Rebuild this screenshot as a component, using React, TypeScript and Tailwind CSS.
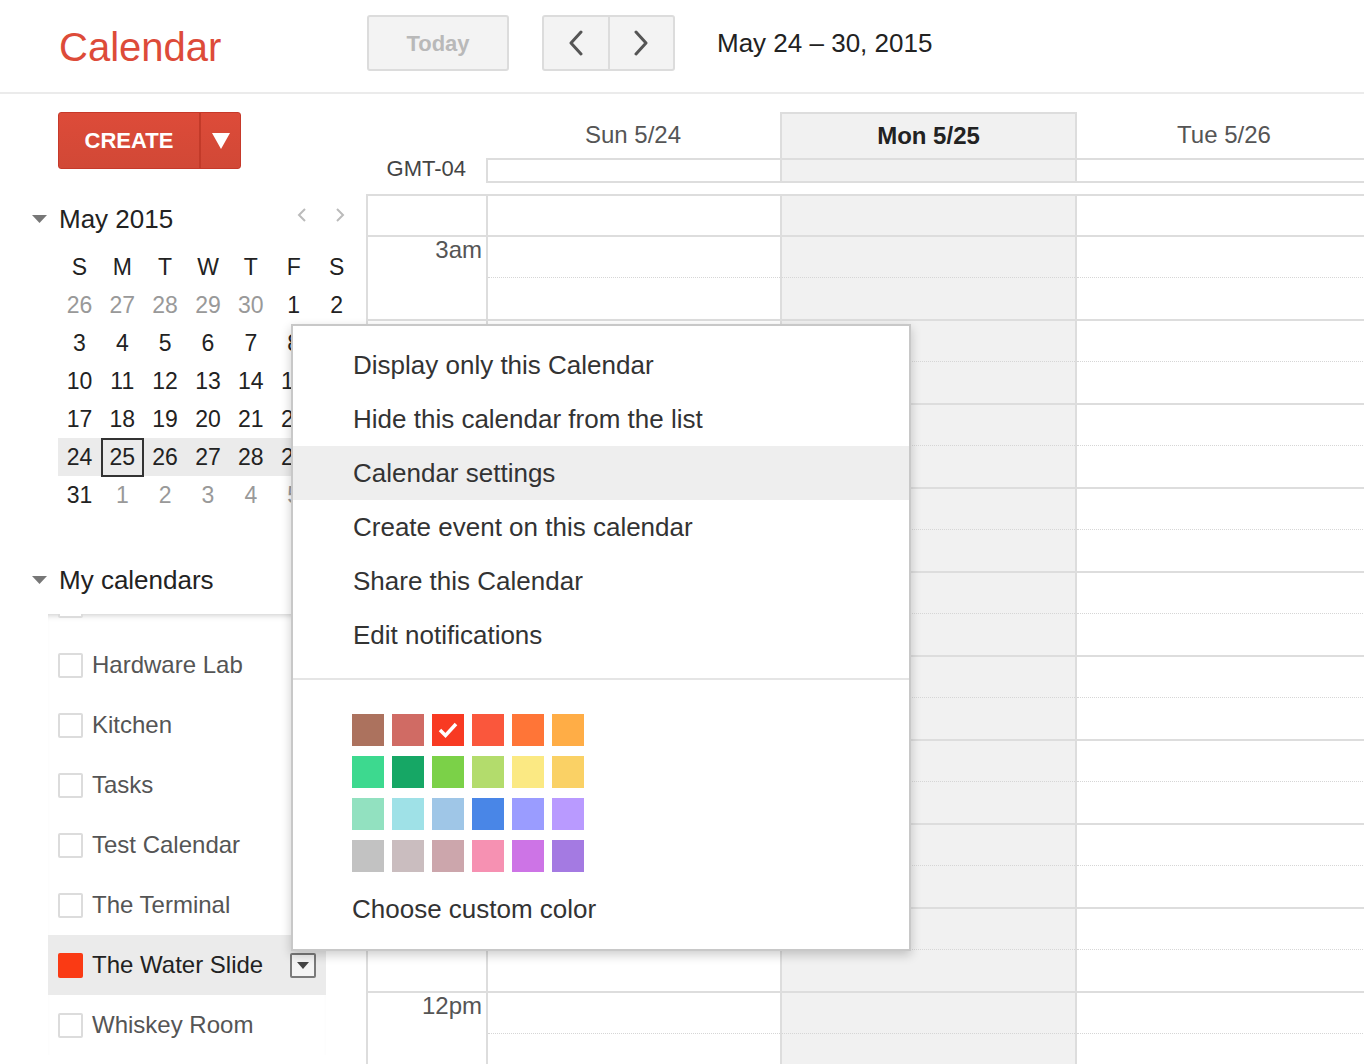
import React from "react";

const FONT = "font-['Liberation_Sans',Arial,Helvetica,sans-serif]";

type Cell = { d: number; muted?: boolean; today?: boolean };

const weeks: Cell[][] = [
  [{ d: 26, muted: true }, { d: 27, muted: true }, { d: 28, muted: true }, { d: 29, muted: true }, { d: 30, muted: true }, { d: 1 }, { d: 2 }],
  [{ d: 3 }, { d: 4 }, { d: 5 }, { d: 6 }, { d: 7 }, { d: 8 }, { d: 9 }],
  [{ d: 10 }, { d: 11 }, { d: 12 }, { d: 13 }, { d: 14 }, { d: 15 }, { d: 16 }],
  [{ d: 17 }, { d: 18 }, { d: 19 }, { d: 20 }, { d: 21 }, { d: 22 }, { d: 23 }],
  [{ d: 24 }, { d: 25, today: true }, { d: 26 }, { d: 27 }, { d: 28 }, { d: 29 }, { d: 30 }],
  [{ d: 31 }, { d: 1, muted: true }, { d: 2, muted: true }, { d: 3, muted: true }, { d: 4, muted: true }, { d: 5, muted: true }, { d: 6, muted: true }],
];

const calendars = [
  "Conference Room",
  "Hardware Lab",
  "Kitchen",
  "Tasks",
  "Test Calendar",
  "The Terminal",
  "The Water Slide",
  "Whiskey Room",
];

const days = ["Sun 5/24", "Mon 5/25", "Tue 5/26", "Wed 5/27", "Thu 5/28", "Fri 5/29", "Sat 5/30"];
const hours = ["3am", "4am", "5am", "6am", "7am", "8am", "9am", "10am", "11am", "12pm", "1pm"];

const swatches = [
  ["#ac725e", "#d06b64", "#f83a22", "#fa573c", "#ff7537", "#ffad46"],
  ["#3dd98f", "#16a765", "#7bd148", "#b3dc6c", "#fbe983", "#fad165"],
  ["#92e1c0", "#9fe1e7", "#9fc6e7", "#4986e7", "#9a9cff", "#b99aff"],
  ["#c2c2c2", "#cabdbf", "#cca6ac", "#f691b2", "#cd74e6", "#a47ae2"],
];

const menuItems = [
  "Display only this Calendar",
  "Hide this calendar from the list",
  "Calendar settings",
  "Create event on this calendar",
  "Share this Calendar",
  "Edit notifications",
];

function SmallTri() {
  return (
    <svg width="15" height="8" viewBox="0 0 15 8" className="shrink-0">
      <polygon points="0,0 15,0 7.5,8" fill="#777" />
    </svg>
  );
}

function NavChevron({ left }: { left?: boolean }) {
  return (
    <svg width="16" height="26" viewBox="0 0 16 26">
      <path
        d={left ? "M13 2 L3 13 L13 24" : "M3 2 L13 13 L3 24"}
        fill="none"
        stroke="#555"
        strokeWidth="3"
        strokeLinecap="round"
        strokeLinejoin="round"
      />
    </svg>
  );
}

function SmallChevron({ left }: { left?: boolean }) {
  return (
    <svg width="10" height="16" viewBox="0 0 10 16">
      <path
        d={left ? "M8 2 L2 8 L8 14" : "M2 2 L8 8 L2 14"}
        fill="none"
        stroke="#bbb"
        strokeWidth="2"
      />
    </svg>
  );
}

function TimeColumn() {
  return (
    <div className="w-[122px] shrink-0 border-l-2 border-r-2 border-[#ddd]">
      <div className="h-[41px] border-b-2 border-[#ddd]" />
      {hours.map((h) => (
        <div key={h} className="h-[84px] border-b-2 border-[#ddd] pt-[1px] pr-[4px] text-right text-[24px] leading-[24px] text-[#555]">
          {h}
        </div>
      ))}
    </div>
  );
}

function DayColumn({ active }: { active?: boolean }) {
  return (
    <div className={`shrink-0 border-r-2 border-[#ddd] ${active ? "w-[295px] bg-[#f1f1f1]" : "w-[294px]"}`}>
      <div className="h-[41px] border-b-2 border-[#ddd]" />
      {hours.map((h) => (
        <div key={h} className="h-[84px]">
          <div className="h-[41px] border-b border-dotted border-[#d6d6d6]" />
          <div className="h-[43px] border-b-2 border-solid border-[#ddd]" />
        </div>
      ))}
    </div>
  );
}

export default function App() {
  return (
    <div className={`${FONT} relative w-[1364px] h-[1064px] overflow-hidden bg-white text-[#222]`}>
      {/* Top header */}
      <header className="flex h-[94px] items-start border-b-2 border-[#ebebeb]">
        <div className="w-[367px] shrink-0 pl-[59px] pt-[27px] text-[40px] leading-[40px] text-[#dd4b39]">Calendar</div>
        <div className="mt-[15px] flex h-[56px] w-[142px] items-center justify-center rounded-[3px] border-2 border-[#dcdcdc] bg-[#f3f3f3] text-[22px] font-bold text-[#b9b9b9]">
          Today
        </div>
        <div className="ml-[33px] mt-[15px] flex h-[56px] w-[133px] rounded-[3px] border-2 border-[#dcdcdc] bg-[#f3f3f3]">
          <div className="flex flex-1 items-center justify-center border-r-2 border-[#dcdcdc]">
            <NavChevron left />
          </div>
          <div className="flex flex-1 items-center justify-center">
            <NavChevron />
          </div>
        </div>
        <div className="ml-[42px] pt-[30px] text-[26px] leading-[26px] text-[#222]">May 24 – 30, 2015</div>
      </header>

      <div className="flex">
        {/* Sidebar */}
        <aside className="flex w-[366px] shrink-0 flex-col">
          <div className="ml-[58px] mt-[18px] flex h-[57px] w-[183px] overflow-hidden rounded-[3px] border border-[#c6392a] bg-linear-to-b from-[#dd4b39] to-[#d14836]">
            <div className="flex w-[142px] items-center justify-center border-r-2 border-[#c23a29] text-[22px] font-bold text-white">
              CREATE
            </div>
            <div className="flex flex-1 items-center justify-center">
              <svg width="18" height="16" viewBox="0 0 18 16">
                <polygon points="0,0 18,0 9,16" fill="#fff" />
              </svg>
            </div>
          </div>

          {/* Mini calendar */}
          <div className="mt-[31px] flex h-[38px] items-center pl-[32px] pr-[21px]">
            <SmallTri />
            <span className="ml-[12px] text-[26px] leading-[30px] text-[#222]">May 2015</span>
            <div className="ml-auto -mt-[8px] flex gap-[28px]">
              <SmallChevron left />
              <SmallChevron />
            </div>
          </div>
          <div className="ml-[58px] mt-[10px] w-[300px] text-[23px]">
            <div className="grid h-[38px] grid-cols-7">
              {["S", "M", "T", "W", "T", "F", "S"].map((d, i) => (
                <div key={i} className="flex items-center justify-center text-[#222]">
                  {d}
                </div>
              ))}
            </div>
            {weeks.map((w, wi) => (
              <div key={wi} className={`grid h-[38px] grid-cols-7 ${wi === 4 ? "bg-[#ebebeb]" : ""}`}>
                {w.map((c, ci) => (
                  <div
                    key={ci}
                    className={`flex items-center justify-center ${c.muted ? "text-[#999]" : "text-[#222]"} ${
                      c.today ? "border-2 border-[#333]" : ""
                    }`}
                  >
                    {c.d}
                  </div>
                ))}
              </div>
            ))}
          </div>

          {/* My calendars */}
          <div className="mt-[36px] h-[64px] pl-[32px] pt-[15px]">
            <div className="flex h-[30px] items-center">
              <SmallTri />
              <span className="ml-[12px] text-[26px] leading-[30px] text-[#222]">My calendars</span>
            </div>
          </div>
          <div className="ml-[48px] w-[278px] overflow-hidden shadow-[inset_0_6px_6px_-5px_rgba(0,0,0,0.22)]">
            <div className="-mt-[39px]">
              {calendars.map((name) => {
                const sel = name === "The Water Slide";
                return (
                  <div key={name} className={`flex h-[60px] items-center pl-[10px] pr-[10px] ${sel ? "bg-[#ebebeb]" : ""}`}>
                    {sel ? (
                      <div className="h-[25px] w-[25px] rounded-[2px] bg-[#fa3a14]" />
                    ) : (
                      <div className="h-[25px] w-[25px] rounded-[2px] border-2 border-[#dcdcdc] bg-white" />
                    )}
                    <span className={`ml-[9px] text-[24px] leading-[28px] ${sel ? "text-[#222]" : "text-[#555]"}`}>{name}</span>
                    {sel && (
                      <div className="ml-auto flex h-[25px] w-[26px] items-center justify-center rounded-[2px] border-2 border-[#7a7a7a] bg-[#f4f4f4]">
                        <svg width="12" height="7" viewBox="0 0 12 7">
                          <polygon points="0,0 12,0 6,7" fill="#444" />
                        </svg>
                      </div>
                    )}
                  </div>
                );
              })}
            </div>
          </div>
        </aside>

        {/* Main week view */}
        <main className="min-w-0 flex-1 overflow-hidden">
          <div className="mt-[18px] flex">
            <div className="flex w-[120px] shrink-0 flex-col justify-end">
              <div className="h-[25px] pb-[3px] pr-[20px] text-right text-[22px] leading-[22px] text-[#444]">GMT-04</div>
            </div>
            {days.map((d, i) => {
              if (i === 1) {
                return (
                  <div key={d} className="flex w-[297px] shrink-0 flex-col border-x-2 border-t-2 border-[#ddd] bg-[#f1f1f1]">
                    <div className="flex h-[44px] items-center justify-center text-[24px] font-bold text-[#222]">{d}</div>
                    <div className="h-[25px] border-y-2 border-[#ddd]" />
                  </div>
                );
              }
              return (
                <div key={d} className="flex w-[294px] shrink-0 flex-col">
                  <div className="flex h-[46px] items-center justify-center text-[24px] text-[#555]">{d}</div>
                  <div className={`h-[25px] border-y-2 border-[#ddd] ${i === 0 ? "border-l-2" : "border-r-2"}`} />
                </div>
              );
            })}
          </div>

          <div className="mt-[11px] flex border-t-2 border-[#ddd]">
            <TimeColumn />
            {days.map((d, i) => (
              <DayColumn key={d} active={i === 1} />
            ))}
          </div>
        </main>
      </div>

      {/* Context menu */}
      <div className="absolute left-[291px] top-[324px] z-20 w-[620px] border-2 border-[#c8c8c8] bg-white shadow-[0_4px_10px_rgba(0,0,0,0.2)]">
        <div className="pb-[16px] pt-[12px]">
          {menuItems.map((m) => (
            <div
              key={m}
              className={`flex h-[54px] items-center pl-[60px] text-[26px] text-[#333] ${m === "Calendar settings" ? "bg-[#eeeeee]" : ""}`}
            >
              {m}
            </div>
          ))}
        </div>
        <div className="h-[2px] bg-[#e5e5e5]" />
        <div className="pl-[59px] pt-[34px] pb-[25px]">
          <div className="flex flex-col gap-[10px]">
            {swatches.map((row, ri) => (
              <div key={ri} className="flex gap-[8px]">
                {row.map((c, ci) => (
                  <div key={ci} className="flex h-[32px] w-[32px] items-center justify-center" style={{ backgroundColor: c }}>
                    {ri === 0 && ci === 2 && (
                      <svg width="32" height="32" viewBox="0 0 32 32">
                        <path d="M8 16 L13.5 21.5 L24 10" fill="none" stroke="#fff" strokeWidth="3.5" />
                      </svg>
                    )}
                  </div>
                ))}
              </div>
            ))}
          </div>
          <div className="mt-[22px] text-[26px] leading-[30px] text-[#333]">Choose custom color</div>
        </div>
      </div>
    </div>
  );
}
